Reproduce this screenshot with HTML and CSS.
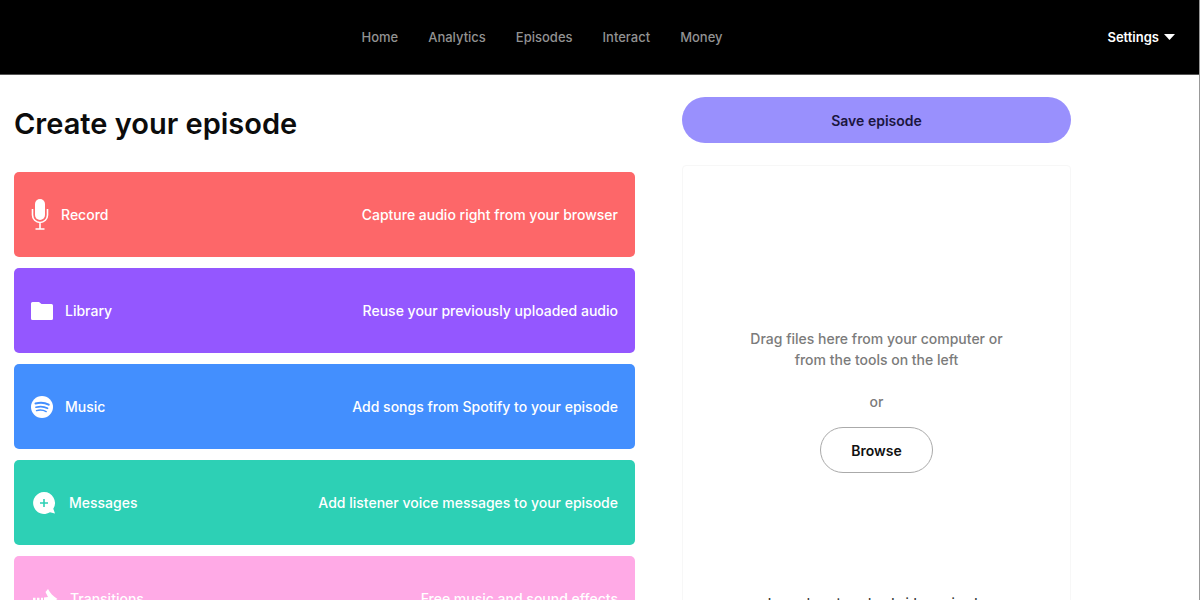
FILE: index.html
```html
<!DOCTYPE html>
<html lang="en">

<head>
    <meta charset="UTF-8">
    <title>Create your episode</title>
    <link rel="stylesheet" href="styles.css">
</head>

<body>

    <header class="topbar">
        <nav class="nav">
            <a href="#">Home</a>
            <a href="#">Analytics</a>
            <a href="#">Episodes</a>
            <a href="#">Interact</a>
            <a href="#">Money</a>
        </nav>
        <button class="settings" type="button">
            Settings
            <svg width="11" height="6" viewBox="0 0 11 6"><path d="M0 0h11L5.5 6z" fill="#fff"/></svg>
        </button>
    </header>

    <main class="page">

        <section class="tools">
            <h1>Create your episode</h1>

            <button class="tool record" type="button">
                <svg width="18" height="32" viewBox="0 0 18 32">
                    <rect x="4" y="0" width="10" height="21" rx="5" fill="#fff"/>
                    <path d="M1.500 10v6a7.500 7.500 0 0 0 15 0v-6M9 24v6M4.500 30h9" fill="none" stroke="#fff" stroke-width="1.600"/>
                </svg>
                <span class="name">Record</span>
                <span class="info">Capture audio right from your browser</span>
            </button>

            <button class="tool library" type="button">
                <svg width="22" height="18" viewBox="0 0 22 18">
                    <path d="M1.500 0H8l2.500 2h10A1.500 1.500 0 0 1 22 3.500v13a1.500 1.500 0 0 1-1.500 1.500h-19A1.500 1.500 0 0 1 0 16.500v-15A1.500 1.500 0 0 1 1.500 0z" fill="#fff"/>
                </svg>
                <span class="name">Library</span>
                <span class="info">Reuse your previously uploaded audio</span>
            </button>

            <button class="tool music" type="button">
                <svg width="22" height="22" viewBox="0 0 22 22">
                    <circle cx="11" cy="11" r="11" fill="#fff"/>
                    <g fill="none" stroke="#438ffe" stroke-linecap="round">
                        <path d="M4.500 7.500c4.500-1.300 9.500-.9 13.200 1.200" stroke-width="2"/>
                        <path d="M5 11.200c4-1.100 8.300-.7 11.500 1.100" stroke-width="1.700"/>
                        <path d="M5.500 14.600c3.400-.9 6.900-.6 9.700 1" stroke-width="1.400"/>
                    </g>
                </svg>
                <span class="name">Music</span>
                <span class="info">Add songs from Spotify to your episode</span>
            </button>

            <button class="tool messages" type="button">
                <svg width="26" height="22" viewBox="0 0 26 22">
                    <path d="M13 0a11 11 0 0 1 9.300 16.800L24 21.500l-5-1.200A11 11 0 1 1 13 0z" fill="#fff"/>
                    <path d="M13 7v8M9 11h8" stroke="#2dd0b5" stroke-width="1.600"/>
                </svg>
                <span class="name">Messages</span>
                <span class="info">Add listener voice messages to your episode</span>
            </button>

            <button class="tool transitions" type="button">
                <svg width="27" height="20" viewBox="0 0 27 20">
                    <path d="M17 0c2 4 5 7 9.500 10-4.500 3-7.500 6-9.500 10l-3-2 2.500-5.500H13v-4l4-.5L14.500 3z" fill="#fff"/>
                    <path d="M2 10.500h2.500M6 10.500h2.500M10 10.500h2" stroke="#fff" stroke-width="3.500"/>
                </svg>
                <span class="name">Transitions</span>
                <span class="info">Free music and sound effects</span>
            </button>
        </section>

        <aside class="side">
            <button class="save" type="button">Save episode</button>

            <div class="dropzone">
                <p class="hint">Drag files here from your computer or from the tools on the left</p>
                <p class="or">or</p>
                <button class="browse" type="button">Browse</button>
                <a class="learn" href="#">Learn how to upload video episode</a>
            </div>
        </aside>

    </main>

</body>

</html>
```

FILE: styles.css
```css
* {
    box-sizing: border-box;
}

body {
    margin: 0;
    height: 100vh;
    overflow: hidden;
    border-right: 1px solid #999;
    background-color: #fff;
    color: #0c0c0c;
    font-family: Inter, "Liberation Sans", sans-serif;
    font-size: 14px;
}

button {
    border: none;
    font: inherit;
    cursor: pointer;
}

.topbar {
    display: grid;
    grid-template-columns: 1fr auto 1fr;
    align-items: center;
    height: 75px;
    padding: 0 24px;
    border-bottom: 1px solid #555;
    background-color: #000;
}

.nav {
    grid-column: 2;
    display: flex;
    gap: 30px;
    padding-right: 115px;
}

.nav a {
    color: #929292;
    font-size: 13px;
    font-weight: 500;
    text-decoration: none;
}

.settings {
    justify-self: end;
    display: flex;
    align-items: center;
    gap: 5px;
    padding: 0;
    background: none;
    color: #fff;
    font-size: 13px;
    font-weight: 600;
}

.page {
    display: grid;
    grid-template-columns: 621fr 389fr;
    gap: 47px;
    padding: 22px 128px 0 14px;
}

.tools {
    display: flex;
    flex-direction: column;
    gap: 11px;
}

h1 {
    margin: 8px 0 19px;
    font-size: 29px;
    font-weight: 600;
    line-height: 37px;
}

.tool {
    display: flex;
    align-items: center;
    height: 85px;
    padding: 0 17px;
    border-radius: 5px;
    color: #fff;
    font-weight: 500;
    text-align: left;
}

.name {
    margin-left: 12px;
}

.info {
    margin-left: auto;
}

.record {
    background-color: #fd6769;
}

.library {
    background-color: #9457ff;
}

.music {
    background-color: #438ffe;
}

.messages {
    background-color: #2dd0b5;
}

.transitions {
    background-color: #ffaae6;
}

.side {
    display: flex;
    flex-direction: column;
    gap: 22px;
}

.save {
    height: 46px;
    border-radius: 23px;
    background-color: #9990fd;
    color: #1b1640;
    font-weight: 600;
}

.dropzone {
    display: flex;
    flex-direction: column;
    align-items: center;
    padding: 162px 60px 0;
    border: 1px solid #f7f7f7;
    border-radius: 4px;
    color: #7b7b7b;
    font-weight: 500;
    line-height: 21px;
    text-align: center;
}

.dropzone p {
    margin: 0 0 21px;
}

.dropzone .or {
    margin-bottom: 15px;
}

.browse {
    height: 46px;
    padding: 0 30px;
    border: 1px solid #aaa;
    border-radius: 23px;
    background-color: #fff;
    color: #111;
    font-weight: 600;
}

.learn {
    margin-top: 120px;
    color: #333;
    font-size: 13px;
    text-decoration: none;
}
```
